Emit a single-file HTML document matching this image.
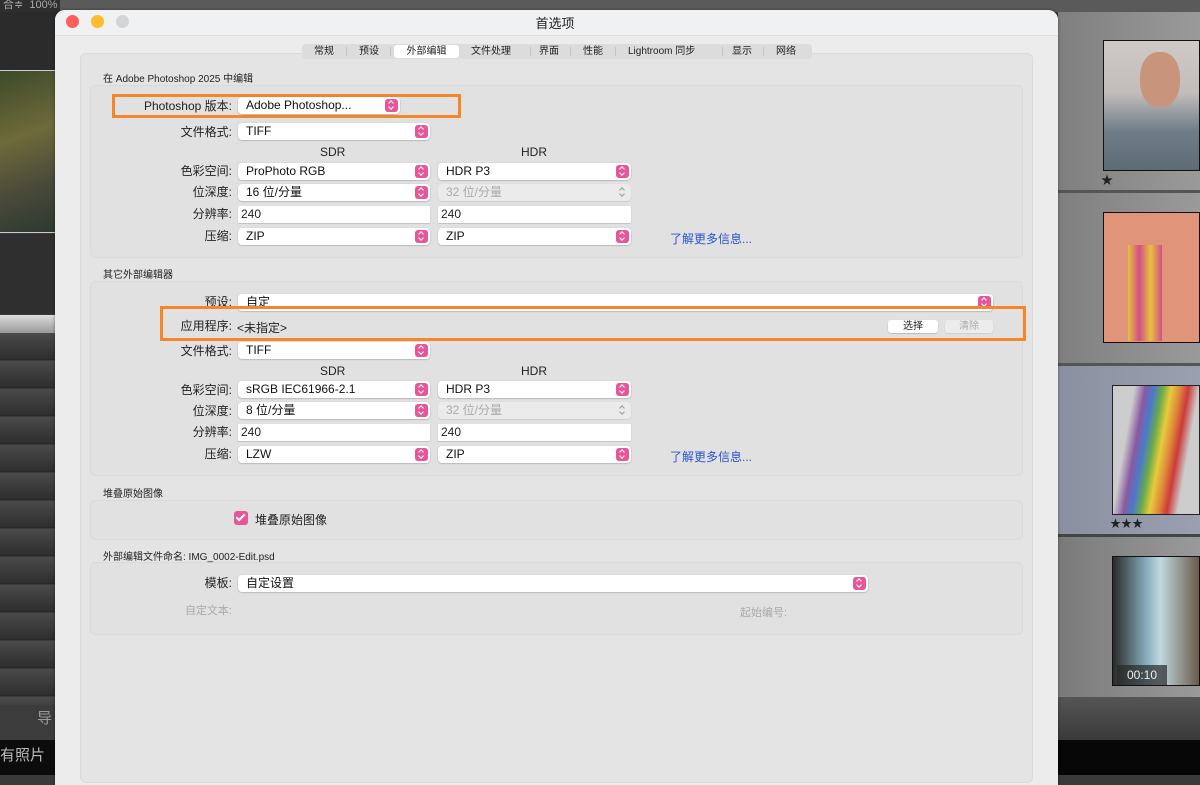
<!DOCTYPE html>
<html><head><meta charset="utf-8"><style>
*{margin:0;padding:0;box-sizing:border-box}
body{width:1200px;height:775px;overflow:hidden;position:relative;background:#3a3a3a;font-family:"Liberation Sans","Noto Sans CJK SC",sans-serif;font-size:12px;color:#222}
.a{position:absolute}
.lbl{position:absolute;right:968px;text-align:right;white-space:nowrap;font-size:12px;color:#222;line-height:14px}
.pop{position:absolute;height:17px;background:#fff;border-radius:4px;box-shadow:0 0.5px 1.5px rgba(0,0,0,.3);padding-left:8px;line-height:17px;font-size:12px;color:#111;white-space:nowrap}
.pop i{position:absolute;right:2px;top:2px;width:13px;height:13px;border-radius:3px;background:#e8569a;}
.pop i:before{content:"";position:absolute;left:4px;top:2px;width:3px;height:3px;border-left:1.3px solid #fff;border-top:1.3px solid #fff;transform:rotate(45deg)}
.pop i:after{content:"";position:absolute;left:4px;top:6px;width:3px;height:3px;border-right:1.3px solid #fff;border-bottom:1.3px solid #fff;transform:rotate(45deg)}
.dis{background:#ebebeb;color:#aaa;box-shadow:0 0.5px 1px rgba(0,0,0,.15)}
.dis i{background:none}.dis i:before{border-color:#999}.dis i:after{border-color:#999}
.txt{position:absolute;height:17px;background:#fff;border-radius:1px;padding-left:3px;line-height:17px;box-shadow:0 0.5px 1px rgba(0,0,0,.25)}
.sec{position:absolute;left:90px;width:933px;background:#e1e1e1;border:1px solid #dadada;border-radius:5px}
.hd{position:absolute;left:103px;font-size:10px;color:#222;line-height:12px;z-index:2}
.orange{position:absolute;border:3px solid #f5862a}
.link{position:absolute;color:#2a55d0;font-size:12px}
.sep{position:absolute;top:3px;width:1px;height:9px;background:#c4c4c4}
</style></head><body>
<!-- left strip -->
<div class="a" style="left:0;top:0;width:60px;height:12px;background:#2e2e2e;color:#aaa;font-size:11px;line-height:10px">&nbsp;合≑ &nbsp;100%</div>
<div class="a" style="left:0;top:12px;width:60px;height:58px;background:#2b2b2b"></div>
<div class="a" style="left:0;top:70px;width:60px;height:163px;background:linear-gradient(160deg,#3d4a2a,#6e6a3a 40%,#4a4a3a 70%,#2b3830);border-top:1px solid #ccc;border-bottom:1px solid #ccc"></div>
<div class="a" style="left:0;top:234px;width:60px;height:80px;background:#2f2f2f"></div>
<div class="a" style="left:0;top:315px;width:60px;height:18px;background:linear-gradient(#ddd,#999)"></div>
<div class="a" style="left:0;top:333px;width:60px;height:372px;background:repeating-linear-gradient(#4a4a4a 0,#2e2e2e 26px,#222 27px,#555 28px)"></div>
<div class="a" style="left:0;top:705px;width:60px;height:35px;background:#3c3c3c;color:#999;font-size:15px;text-align:right;padding-right:8px;line-height:28px">导</div>
<div class="a" style="left:0;top:740px;width:60px;height:35px;background:#0c0c0c;color:#bbb;font-size:15px;line-height:32px;white-space:nowrap;overflow:hidden">有照片</div>
<!-- top behind -->
<div class="a" style="left:60px;top:0;width:1140px;height:12px;background:#5a5a5a"></div>
<!-- right strip -->
<div class="a" style="left:1058px;top:12px;width:142px;height:178px;background:linear-gradient(90deg,#7f7f7f,#9a9a9a)"></div>
<div class="a" style="left:1103px;top:40px;width:97px;height:131px;background:linear-gradient(#cfcac8,#c2bdbb 40%,#6f7d88 70%,#5e6b75);border:1px solid #111"></div>
<div class="a" style="left:1140px;top:52px;width:40px;height:55px;border-radius:45%;background:#c8957c"></div>
<div class="a" style="left:1101px;top:171px;color:#222;font-size:12px">★</div>
<div class="a" style="left:1058px;top:190px;width:142px;height:3px;background:#555"></div>
<div class="a" style="left:1058px;top:193px;width:142px;height:170px;background:linear-gradient(90deg,#7f7f7f,#9a9a9a)"></div>
<div class="a" style="left:1103px;top:212px;width:97px;height:131px;background:#e0957a;border:1px solid #111"></div>
<div class="a" style="left:1128px;top:245px;width:34px;height:96px;background:linear-gradient(90deg,#e6c23a,#d44d8a,#e6c23a,#d44d8a)"></div>
<div class="a" style="left:1058px;top:363px;width:142px;height:3px;background:#555"></div>
<div class="a" style="left:1058px;top:366px;width:142px;height:168px;background:linear-gradient(90deg,#8a90a0,#9aa0b0)"></div>
<div class="a" style="left:1112px;top:385px;width:88px;height:130px;background:linear-gradient(100deg,#ccc 20%,#8a5aa0 30%,#4a7acc 38%,#6aaa4a 46%,#e6cc3a 54%,#e08a3a 62%,#cc3a3a 70%,#ccc 80%);border:1px solid #222"></div>
<div class="a" style="left:1110px;top:515px;color:#222;font-size:11px">★★★</div>
<div class="a" style="left:1058px;top:534px;width:142px;height:3px;background:#444"></div>
<div class="a" style="left:1058px;top:537px;width:142px;height:160px;background:linear-gradient(90deg,#7a7a7a,#9a9a9a)"></div>
<div class="a" style="left:1112px;top:556px;width:88px;height:130px;background:linear-gradient(90deg,#2a2a2a,#8ab0c0 40%,#c0d8e0 55%,#6a5a4a);border:1px solid #111"></div>
<div class="a" style="left:1117px;top:665px;width:50px;height:20px;background:rgba(40,40,40,.7);color:#eee;font-size:12px;text-align:center;line-height:20px">00:10</div>
<div class="a" style="left:1058px;top:697px;width:142px;height:43px;background:linear-gradient(#555,#3a3a3a)"></div>
<div class="a" style="left:1058px;top:740px;width:142px;height:35px;background:#060606"></div>
<!-- dialog -->
<div class="a" style="left:55px;top:10px;width:1003px;height:775px;background:#ececec;border-radius:10px 10px 0 0;box-shadow:0 0 3px rgba(0,0,0,.4);overflow:hidden">
 <div class="a" style="left:0;top:0;width:1003px;height:26px;background:#eff1f2;border-bottom:1px solid #dcdcdc"></div>
</div>
<div class="a" style="left:66px;top:15px;width:13px;height:13px;border-radius:50%;background:#fe5f57"></div>
<div class="a" style="left:91px;top:15px;width:13px;height:13px;border-radius:50%;background:#febc2e"></div>
<div class="a" style="left:116px;top:15px;width:13px;height:13px;border-radius:50%;background:#d4d4d4"></div>
<div class="a" style="left:500px;top:13px;width:110px;text-align:center;font-size:13px;color:#222">首选项</div>
<div class="a" style="left:80px;top:53px;width:953px;height:730px;background:#e4e4e4;border:1px solid #dadada;border-radius:6px"></div>
<!-- tabs -->
<div class="a" style="left:302px;top:44px;width:510px;height:15px;background:#dcdcdc;border-radius:4px;font-size:10px;line-height:15px;color:#222">
 <span class="a" style="left:12px">常规</span><span class="sep" style="left:44px"></span>
 <span class="a" style="left:57px">预设</span><span class="sep" style="left:88px"></span>
 <span class="a" style="left:92px;top:1px;width:65px;height:13px;background:#fff;border-radius:3px;text-align:center;line-height:13px">外部编辑</span>
 <span class="a" style="left:169px">文件处理</span><span class="sep" style="left:228px"></span>
 <span class="a" style="left:237px">界面</span><span class="sep" style="left:268px"></span>
 <span class="a" style="left:281px">性能</span><span class="sep" style="left:313px"></span>
 <span class="a" style="left:326px">Lightroom 同步</span><span class="sep" style="left:420px"></span>
 <span class="a" style="left:430px">显示</span><span class="sep" style="left:461px"></span>
 <span class="a" style="left:474px">网络</span>
</div>
<!-- section 1 -->
<div class="sec" style="top:85px;height:173px"></div>
<div class="hd" style="top:74px">在 Adobe Photoshop 2025 中编辑</div>
<div class="orange" style="left:112px;top:94px;width:349px;height:24px"></div>
<div class="lbl" style="top:99px">Photoshop 版本:</div>
<div class="pop" style="left:238px;top:97px;width:162px">Adobe Photoshop...<i></i></div>
<div class="lbl" style="top:125px">文件格式:</div>
<div class="pop" style="left:238px;top:123px;width:192px">TIFF<i></i></div>
<div class="a" style="left:320px;top:145px">SDR</div><div class="a" style="left:521px;top:145px">HDR</div>
<div class="lbl" style="top:164px">色彩空间:</div>
<div class="pop" style="left:238px;top:163px;width:192px">ProPhoto RGB<i></i></div>
<div class="pop" style="left:438px;top:163px;width:193px">HDR P3<i></i></div>
<div class="lbl" style="top:185px">位深度:</div>
<div class="pop" style="left:238px;top:184px;width:192px">16 位/分量<i></i></div>
<div class="pop dis" style="left:438px;top:184px;width:193px">32 位/分量<i></i></div>
<div class="lbl" style="top:207px">分辨率:</div>
<div class="txt" style="left:238px;top:206px;width:192px">240</div>
<div class="txt" style="left:438px;top:206px;width:193px">240</div>
<div class="lbl" style="top:229px">压缩:</div>
<div class="pop" style="left:238px;top:228px;width:192px">ZIP<i></i></div>
<div class="pop" style="left:438px;top:228px;width:193px">ZIP<i></i></div>
<div class="link" style="left:670px;top:230px">了解更多信息...</div>
<!-- section 2 -->
<div class="sec" style="top:281px;height:195px"></div>
<div class="hd" style="top:270px">其它外部编辑器</div>
<div class="lbl" style="top:295px">预设:</div>
<div class="pop" style="left:238px;top:294px;width:755px">自定<i></i></div>
<div class="orange" style="left:160px;top:306px;width:866px;height:35px"></div>
<div class="lbl" style="top:319px">应用程序:</div>
<div class="a" style="left:237px;top:319px">&lt;未指定&gt;</div>
<div class="a" style="left:888px;top:320px;width:50px;height:13px;background:#fff;border-radius:3px;box-shadow:0 .5px 1px rgba(0,0,0,.3);font-size:10px;text-align:center;line-height:13px">选择</div>
<div class="a" style="left:945px;top:320px;width:48px;height:13px;background:#ececec;border-radius:3px;box-shadow:0 .5px 1px rgba(0,0,0,.15);font-size:10px;text-align:center;line-height:13px;color:#aaa">清除</div>
<div class="lbl" style="top:344px">文件格式:</div>
<div class="pop" style="left:238px;top:342px;width:192px">TIFF<i></i></div>
<div class="a" style="left:320px;top:364px">SDR</div><div class="a" style="left:521px;top:364px">HDR</div>
<div class="lbl" style="top:383px">色彩空间:</div>
<div class="pop" style="left:238px;top:381px;width:192px">sRGB IEC61966-2.1<i></i></div>
<div class="pop" style="left:438px;top:381px;width:193px">HDR P3<i></i></div>
<div class="lbl" style="top:404px">位深度:</div>
<div class="pop" style="left:238px;top:402px;width:192px">8 位/分量<i></i></div>
<div class="pop dis" style="left:438px;top:402px;width:193px">32 位/分量<i></i></div>
<div class="lbl" style="top:425px">分辨率:</div>
<div class="txt" style="left:238px;top:424px;width:192px">240</div>
<div class="txt" style="left:438px;top:424px;width:193px">240</div>
<div class="lbl" style="top:447px">压缩:</div>
<div class="pop" style="left:238px;top:446px;width:192px">LZW<i></i></div>
<div class="pop" style="left:438px;top:446px;width:193px">ZIP<i></i></div>
<div class="link" style="left:670px;top:448px">了解更多信息...</div>
<!-- section 3 -->
<div class="sec" style="top:500px;height:40px"></div>
<div class="hd" style="top:489px">堆叠原始图像</div>
<div class="a" style="left:234px;top:511px;width:14px;height:14px;border-radius:3px;background:#e8569a"><div class="a" style="left:4px;top:1px;width:5px;height:9px;border-right:2px solid #fff;border-bottom:2px solid #fff;transform:rotate(45deg)"></div></div>
<div class="a" style="left:255px;top:511px">堆叠原始图像</div>
<!-- section 4 -->
<div class="sec" style="top:562px;height:73px"></div>
<div class="hd" style="top:552px">外部编辑文件命名: IMG_0002-Edit.psd</div>
<div class="lbl" style="top:576px">模板:</div>
<div class="pop" style="left:238px;top:575px;width:630px">自定设置<i></i></div>
<div class="lbl" style="top:604px;color:#aaa;font-size:11px">自定文本:</div>
<div class="a" style="left:740px;top:604px;color:#aaa;font-size:11px">起始编号:</div>
</body></html>
